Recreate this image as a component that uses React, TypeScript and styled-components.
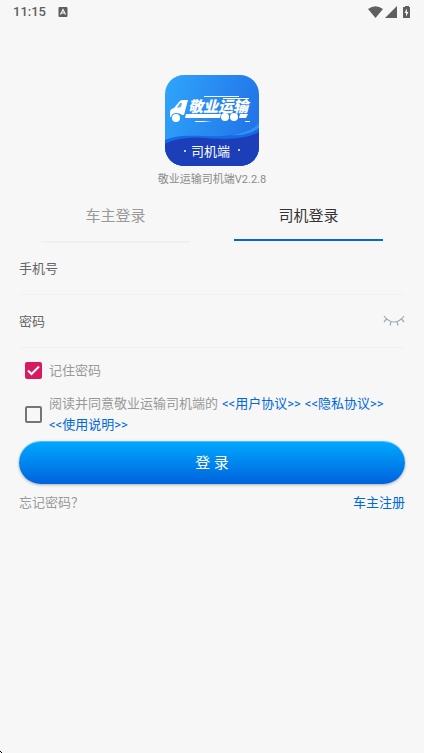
import React, { useState } from "react";
import styled, { createGlobalStyle } from "styled-components";

const GlobalStyle = createGlobalStyle`
  *, *::before, *::after { box-sizing: border-box; }
  html { height: 100%; }
  body {
    margin: 0;
    min-height: 100%;
    background: #f7f7f7;
    color: #666;
    font-family: Roboto, "Noto Sans CJK SC", sans-serif;
    font-size: 13px;
    line-height: 21px;
  }
  button, input { font: inherit; color: inherit; }
`;

const StatusBar = styled.header`
  display: flex;
  align-items: center;
  justify-content: space-between;
  height: 23px;
  padding: 0 13px;
  color: #5f5f5f;
`;

const StatusGroup = styled.div<{ $gap: number }>`
  display: flex;
  align-items: center;
  gap: ${(p) => p.$gap}px;
`;

const Clock = styled.time`
  font-size: 13px;
  font-weight: 500;
`;

const Content = styled.main`
  padding: 52px 19px 24px;
`;

const Brand = styled.div`
  display: flex;
  flex-direction: column;
  align-items: center;
  gap: 5px;
`;

const Logo = styled.svg`
  display: block;
  width: 94px;
  height: 91px;
`;

const AppName = styled.h1`
  margin: 0;
  color: #8c8c8c;
  font-size: 11px;
  font-weight: 400;
  line-height: 17px;
`;

const Tabs = styled.div`
  display: flex;
  align-items: flex-start;
  height: 51px;
  margin-top: 3px;
`;

const Tab = styled.button<{ $active: boolean }>`
  flex: 1;
  margin: 0 22px;
  padding: 15px 0 ${(p) => (p.$active ? 12 : 14)}px;
  border: 0;
  border-bottom: 2px solid ${(p) => (p.$active ? "#0067dc" : "#f0f0f0")};
  background: none;
  color: ${(p) => (p.$active ? "#333" : "#999")};
  font-size: 15px;
  line-height: 21px;
  cursor: pointer;
`;

const Field = styled.label`
  display: flex;
  align-items: center;
  height: 53px;
  border-bottom: 1px solid #f1f1f1;
`;

const FieldInput = styled.input`
  flex: 1;
  min-width: 0;
  padding: 0;
  border: 0;
  outline: 0;
  background: none;
  &::placeholder { color: #666; opacity: 1; }
`;

const IconButton = styled.button`
  display: flex;
  padding: 0;
  border: 0;
  background: none;
  cursor: pointer;
`;

const CheckRow = styled.div`
  display: flex;
  align-items: center;
  gap: 7px;
  margin-top: 12px;
  padding-left: 6px;
  color: #999;
`;

const CheckHolder = styled.span`
  position: relative;
  flex: none;
  width: 17px;
  height: 17px;
`;

const CheckInput = styled.input`
  appearance: none;
  display: block;
  width: 17px;
  height: 17px;
  margin: 0;
  border: 2px solid #757575;
  border-radius: 2px;
  cursor: pointer;
  &:checked { border-color: #d81b60; background: #d81b60; }
`;

const CheckMark = styled.svg`
  position: absolute;
  inset: 0;
  pointer-events: none;
`;

const Agreement = styled.div`
  display: flex;
  flex-wrap: wrap;
  column-gap: 4px;
`;

const Link = styled.a`
  color: #0067dc;
  text-decoration: none;
  white-space: nowrap;
`;

const SubmitButton = styled.button`
  display: block;
  width: 100%;
  height: 43px;
  margin-top: 6px;
  border: 0;
  border-top: 1px solid #4fc0ff;
  border-radius: 22px;
  background: linear-gradient(#00a8ff, #0062dc);
  box-shadow: 0 1px 3px rgba(0, 0, 0, 0.3);
  color: #fff;
  font-size: 15px;
  cursor: pointer;
`;

const FooterLinks = styled.nav`
  display: flex;
  justify-content: space-between;
  margin-top: 8px;
`;

const MutedLink = styled(Link)`
  color: #999;
`;

const Pointer = styled.svg`
  position: fixed;
  left: 0;
  bottom: 0;
`;

function TruckLogo() {
  return (
    <Logo viewBox="0 0 94 91" role="img" aria-label="敬业运输 司机端">
      <defs>
        <linearGradient id="sky" x1="0" y1="0" x2="1" y2="0.3">
          <stop offset="0" stopColor="#30a5fc" />
          <stop offset="1" stopColor="#2276e9" />
        </linearGradient>
        <clipPath id="tile">
          <rect width="94" height="91" rx="19" />
        </clipPath>
      </defs>
      <g clipPath="url(#tile)">
        <rect width="94" height="91" fill="url(#sky)" />
        <path d="M0 65C9 61 20 60 39 61C63 62 80 60 94 48V91H0Z" fill="#1669e4" />
        <path d="M66 60C79 58 88 54 94 48V53C87 58 78 61 66 60Z" fill="#3191ef" />
        <path d="M0 69C9 64 22 62 40 63C63 65 82 64 94 57V91H0Z" fill="#1c3fb9" />
      </g>
      <g fill="#fff">
        <path d="M39 21H74V22H39ZM58 23H84V24H58ZM30 46H47L38 47H30ZM80 46H85V47H80Z" />
        <path d="M14 27Q15 25 18 25H23L19 40H17Q15 38 11 38Q7 38 6 42H5V37Q5 34 9 33Z" />
        <path d="M13 31L15 28H17L16 32L12 33Z" fill="#50b5ff" />
        <path d="M21 39H56L55 43H20ZM75 39H83L81 43H74Z" />
        <circle cx="11" cy="43" r="4" />
        <circle cx="60" cy="42" r="4" />
        <circle cx="69" cy="42" r="4" />
        <text
          x="23"
          y="37"
          fontFamily="Noto Sans CJK SC, sans-serif"
          fontSize="15"
          fontWeight="900"
          fontStyle="italic"
        >
          敬业运输
        </text>
        <text x="26" y="81" fontFamily="Noto Sans CJK SC, sans-serif" fontSize="13" fontWeight="400">
          司机端
        </text>
        <circle cx="20" cy="76" r="1" />
        <circle cx="74" cy="75" r="1" />
      </g>
    </Logo>
  );
}

function ClosedEye() {
  return (
    <svg width="22" height="12" viewBox="0 0 22 12" fill="none" stroke="#9ba7b7" strokeWidth="1.2" aria-hidden="true">
      <path d="M1 1C4 5 7 7 11 7S18 5 21 1M3.5 4L1 7M8 6.8L7 10.5M14 6.8L15 10.5M18.5 4L21 7" />
    </svg>
  );
}

export default function App() {
  const [tab, setTab] = useState("driver");
  const [remember, setRemember] = useState(true);
  const [agreed, setAgreed] = useState(false);
  const [visible, setVisible] = useState(false);

  return (
    <>
      <GlobalStyle />
      <StatusBar>
        <StatusGroup $gap={12}>
          <Clock>11:15</Clock>
          <svg width="10" height="10" viewBox="0 0 10 10" aria-hidden="true">
            <rect x="0.5" width="9" height="10" rx="1" fill="#5f5f5f" />
            <path d="M2.5 7.5L5 2.5L7.5 7.5M3.5 6H6.5" fill="none" stroke="#f7f7f7" strokeWidth="1.2" />
          </svg>
        </StatusGroup>
        <StatusGroup $gap={2}>
          <svg width="15" height="12" viewBox="0 0 15 12" fill="#5f5f5f" aria-hidden="true">
            <path d="M0 3Q7.5 -2.5 15 3L7.5 12Z" />
          </svg>
          <svg width="12" height="12" viewBox="0 0 12 12" fill="#5f5f5f" aria-hidden="true">
            <path d="M12 0V12H0Z" />
          </svg>
          <svg width="12" height="12" viewBox="0 0 12 12" aria-hidden="true">
            <path d="M6 0H10V1H11V12H4V1H6Z" fill="#5f5f5f" />
            <path d="M8 2.5L5.5 7H7V10.5L9.5 6H8Z" fill="#f7f7f7" />
          </svg>
        </StatusGroup>
      </StatusBar>
      <Content>
        <Brand>
          <TruckLogo />
          <AppName>敬业运输司机端V2.2.8</AppName>
        </Brand>
        <Tabs role="tablist">
          <Tab type="button" role="tab" aria-selected={tab === "owner"} $active={tab === "owner"} onClick={() => setTab("owner")}>
            车主登录
          </Tab>
          <Tab type="button" role="tab" aria-selected={tab === "driver"} $active={tab === "driver"} onClick={() => setTab("driver")}>
            司机登录
          </Tab>
        </Tabs>
        <form onSubmit={(e) => e.preventDefault()}>
          <Field>
            <FieldInput type="tel" placeholder="手机号" aria-label="手机号" />
          </Field>
          <Field>
            <FieldInput type={visible ? "text" : "password"} placeholder="密码" aria-label="密码" />
            <IconButton type="button" aria-label="显示密码" onClick={() => setVisible(!visible)}>
              <ClosedEye />
            </IconButton>
          </Field>
          <CheckRow>
            <CheckHolder>
              <CheckInput id="remember" type="checkbox" checked={remember} onChange={(e) => setRemember(e.target.checked)} />
              {remember && (
                <CheckMark width="17" height="17" viewBox="0 0 17 17" fill="none" stroke="#fff" strokeWidth="2" aria-hidden="true">
                  <path d="M3 8.5L6.5 12L14 4.5" />
                </CheckMark>
              )}
            </CheckHolder>
            <label htmlFor="remember">记住密码</label>
          </CheckRow>
          <CheckRow>
            <CheckHolder>
              <CheckInput id="agree" type="checkbox" checked={agreed} onChange={(e) => setAgreed(e.target.checked)} />
            </CheckHolder>
            <Agreement>
              <label htmlFor="agree">阅读并同意敬业运输司机端的</label>
              <Link href="#terms">&lt;&lt;用户协议&gt;&gt;</Link>
              <Link href="#privacy">&lt;&lt;隐私协议&gt;&gt;</Link>
              <Link href="#guide">&lt;&lt;使用说明&gt;&gt;</Link>
            </Agreement>
          </CheckRow>
          <SubmitButton type="submit">登 录</SubmitButton>
        </form>
        <FooterLinks>
          <MutedLink href="#forgot">忘记密码？</MutedLink>
          <Link href="#register">车主注册</Link>
        </FooterLinks>
      </Content>
      <Pointer width="2" height="2" viewBox="0 0 2 2" aria-hidden="true">
        <path d="M0 0H1V1H2V2H1V1H0Z" fill="#000" />
      </Pointer>
    </>
  );
}
